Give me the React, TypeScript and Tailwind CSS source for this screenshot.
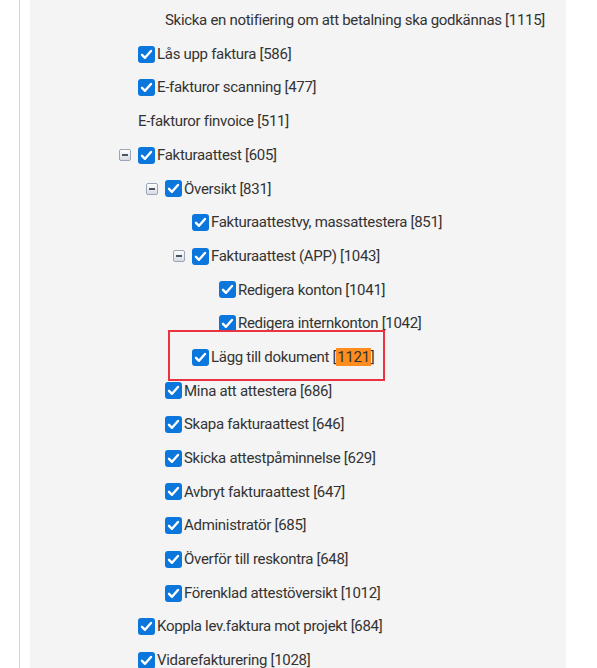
import React from 'react';

type Node = {
  label: string;
  level: number;
  checkbox?: boolean;
  expander?: boolean;
  hl?: string;
};

const rows: Node[] = [
  { label: 'Skicka en notifiering om att betalning ska godkännas [1115]', level: 1, checkbox: false },
  { label: 'Lås upp faktura [586]', level: 0 },
  { label: 'E-fakturor scanning [477]', level: 0 },
  { label: 'E-fakturor finvoice [511]', level: 0, checkbox: false },
  { label: 'Fakturaattest [605]', level: 0, expander: true },
  { label: 'Översikt [831]', level: 1, expander: true },
  { label: 'Fakturaattestvy, massattestera [851]', level: 2 },
  { label: 'Fakturaattest (APP) [1043]', level: 2, expander: true },
  { label: 'Redigera konton [1041]', level: 3 },
  { label: 'Redigera internkonton [1042]', level: 3 },
  { label: 'Lägg till dokument [', level: 2, hl: '1121' },
  { label: 'Mina att attestera [686]', level: 1 },
  { label: 'Skapa fakturaattest [646]', level: 1 },
  { label: 'Skicka attestpåminnelse [629]', level: 1 },
  { label: 'Avbryt fakturaattest [647]', level: 1 },
  { label: 'Administratör [685]', level: 1 },
  { label: 'Överför till reskontra [648]', level: 1 },
  { label: 'Förenklad attestöversikt [1012]', level: 1 },
  { label: 'Koppla lev.faktura mot projekt [684]', level: 0 },
  { label: 'Vidarefakturering [1028]', level: 0 },
];

function Check() {
  return (
    <span className="flex items-center justify-center w-[17px] h-[17px] rounded-[3px] bg-[#0b76dc] shrink-0 mr-[2px]">
      <svg width="13" height="13" viewBox="0 0 13 13" fill="none">
        <path d="M2 6.8 L5 9.8 L11 3" stroke="white" strokeWidth="2.4" strokeLinecap="round" strokeLinejoin="round" />
      </svg>
    </span>
  );
}

function Minus() {
  return (
    <span className="absolute left-[-19px] top-1/2 -translate-y-1/2 w-[12px] h-[12px] rounded-[2px] border border-[#9aa6b8] bg-gradient-to-b from-[#ffffff] to-[#d6dbe3] flex items-center justify-center">
      <span className="w-[6px] h-[2px] bg-[#4b5563]" />
    </span>
  );
}

export default function App() {
  return (
    <div className="w-[597px] h-[668px] bg-white overflow-hidden flex" style={{ fontFamily: 'Roboto, "Liberation Sans", sans-serif' }}>
      <div className="w-[19px] shrink-0" />
      <div className="w-px bg-[#d4d4d4] shrink-0" />
      <div className="w-[10px] shrink-0" />
      <div className="w-[536px] bg-[#f4f4f4] shrink-0 relative">
        <div className="pt-[3.5px] pl-[108px]">
          {rows.map((r, i) => (
            <div
              key={i}
              className="h-[33.7px] flex items-center text-[15px] tracking-[-0.3px] text-[#333333]"
              style={{ paddingLeft: r.level * 27 }}
            >
              <span className="relative flex items-center">
                {r.expander && <Minus />}
                {r.checkbox !== false && <Check />}
                <span>
                  {r.label}
                  {r.hl && (
                    <>
                      <span className="bg-[#ff8c1f] px-[1px]">{r.hl}</span>]
                    </>
                  )}
                </span>
              </span>
            </div>
          ))}
        </div>
        <div className="absolute left-[138px] top-[330px] w-[217px] h-[51px] border-2 border-[#ea3340]" />
      </div>
    </div>
  );
}
